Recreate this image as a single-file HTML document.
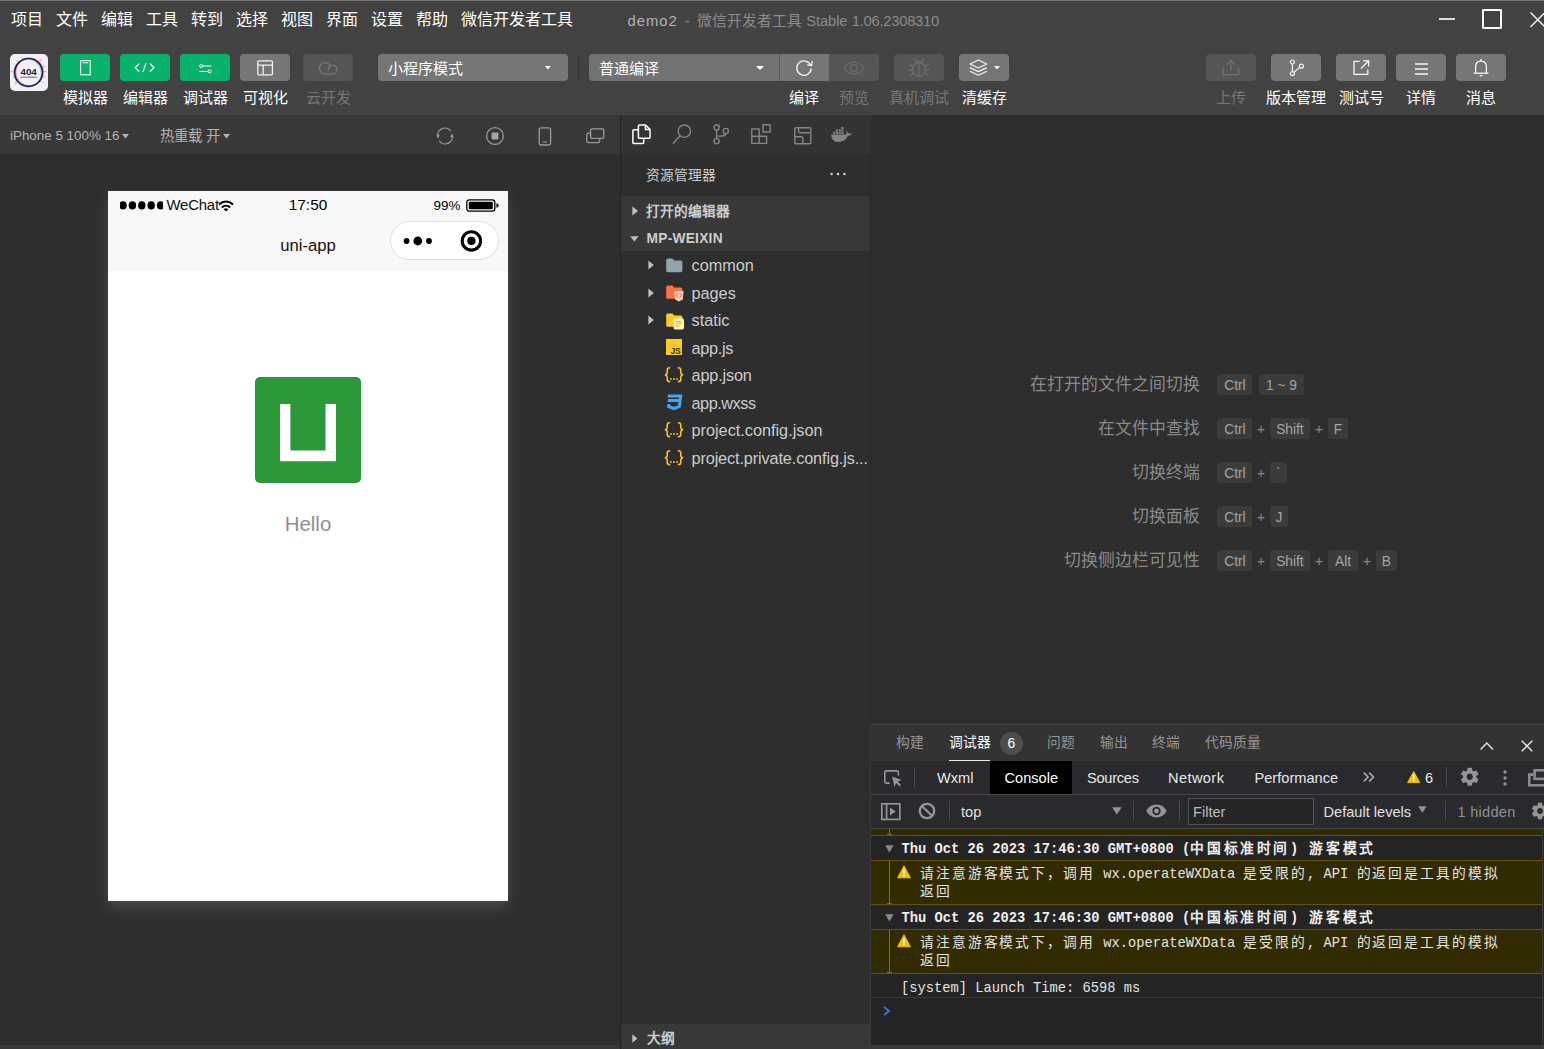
<!DOCTYPE html>
<html lang="zh-CN">
<head>
<meta charset="utf-8">
<title>demo2 - 微信开发者工具 Stable 1.06.2308310</title>
<style>
html,body{margin:0;padding:0;}
body{width:1544px;height:1049px;overflow:hidden;background:#2e2e2e;font-family:"Liberation Sans",sans-serif;color:#fff;position:relative;}
.a{position:absolute;white-space:nowrap;}
.b{position:absolute;}
svg{position:absolute;overflow:visible;}
/* ---------- title + toolbar ---------- */
#top{left:0;top:0;width:1544px;height:115px;background:#424242;}
#topline{left:0;top:0;width:1544px;height:1px;background:#767676;}
.menu{top:9px;height:22px;line-height:22px;font-size:16px;color:#fff;}
.title{top:10px;height:22px;line-height:22px;font-size:14.8px;color:#8c8c8c;}
.gbtn{top:54px;width:50px;height:27px;border-radius:4px;background:#09b26b;}
.ybtn{top:54px;width:50px;height:27px;border-radius:4px;background:#767676;}
.dbtn{top:54px;width:50px;height:27px;border-radius:4px;background:#555555;}
.tl{top:88px;height:20px;line-height:20px;font-size:15px;color:#fff;text-align:center;}
.tl.dis{color:#777;}
.sel{top:54px;height:27px;border-radius:4px;background:#6c6c6c;}
.selt{top:58px;height:22px;line-height:22px;font-size:15px;color:#fff;}
/* ---------- simulator ---------- */
#simbar{left:0;top:115px;width:620px;height:39px;background:#383838;}
.simt{top:125.8px;height:20px;line-height:20px;font-size:13.4px;color:#b3b3b3;}
#vsep1{left:620px;top:115px;width:1px;height:934px;background:#232323;z-index:5;}
#phone{left:108px;top:191px;width:400px;height:710px;background:#fff;box-shadow:0 7px 14px rgba(255,255,255,.14);}
#navbg{left:0;top:0;width:400px;height:80px;background:#f8f8f8;}
.st{color:#000;}
/* ---------- explorer ---------- */
#actbar{left:621px;top:115px;width:250px;height:38px;background:#333333;}
#exphead{left:621px;top:196px;width:250px;height:55px;background:#383838;}
#vsep2{left:870px;top:154px;width:1px;height:891px;background:#282828;}
.sec{font-size:13.75px;font-weight:bold;color:#cccccc;height:20px;line-height:20px;}
.ft{left:691.5px;margin-top:-0.2px;height:24px;line-height:24px;font-size:16.25px;color:#cccccc;}
.jn{height:22px;line-height:22px;font-size:17px;font-weight:bold;color:#fbc02d;letter-spacing:0.2px}
.jn span{font-size:13px;letter-spacing:0.6px;position:relative;top:0.5px}
/* ---------- editor watermark ---------- */
.sl{font-size:16.85px;color:#8a8a8a;height:24px;line-height:26.6px;text-align:right;width:300px;left:899.5px;}
.k{height:21px;line-height:23.6px;border-radius:3px;background:#3b3b3b;color:#a6a6a6;font-size:13.75px;text-align:center;}
.pl{height:21px;line-height:22.4px;color:#8a8a8a;font-size:13.75px;width:12px;text-align:center;}
/* ---------- debugger ---------- */
#dbgline{left:871px;top:724px;width:673px;height:1px;background:#454545;}
#dbgtabs{left:871px;top:725px;width:673px;height:36px;background:#333333;}
.pt{top:733px;height:20px;line-height:20px;font-size:13.75px;color:#969696;}
#dtbar{left:871px;top:761px;width:673px;height:33px;background:#292a2d;}
#ctbar{left:871px;top:795px;width:673px;height:33px;background:#292a2d;}
.dt{top:767px;height:22px;line-height:22px;font-size:14.6px;color:#e8e8e8;}
.ct{top:801px;height:22px;line-height:22px;font-size:14.6px;color:#e0e0e0;}
.vs{width:1px;background:#4a4a4a;}
#cons{left:871px;top:829px;width:671px;height:216px;background:#242424;}
.mono{font-family:"Liberation Mono",monospace;font-size:13.75px;color:#e4e4e4;height:18px;line-height:18px;}
.cj{letter-spacing:1.9px;}
.cjb{letter-spacing:2.6px;}
.warn{left:871px;width:671px;background:#332b00;border-top:1px solid #665500;border-bottom:1px solid #665500;box-sizing:border-box;}
#status{left:0;top:1045px;width:1544px;height:4px;background:#383838;}
</style>
</head>
<body>
<!-- ================= TITLE BAR / MENU ================= -->
<div class="b" id="top"></div>
<div class="b" id="topline"></div>
<div class="a menu" style="left:11px">项目</div>
<div class="a menu" style="left:56px">文件</div>
<div class="a menu" style="left:101px">编辑</div>
<div class="a menu" style="left:146px">工具</div>
<div class="a menu" style="left:191px">转到</div>
<div class="a menu" style="left:236px">选择</div>
<div class="a menu" style="left:281px">视图</div>
<div class="a menu" style="left:326px">界面</div>
<div class="a menu" style="left:371px">设置</div>
<div class="a menu" style="left:416px">帮助</div>
<div class="a menu" style="left:461px">微信开发者工具</div>
<div class="a title" style="left:627.5px;color:#b4b4b4;letter-spacing:1px">demo2</div>
<div class="a title" style="left:685px">-</div>
<div class="a title" style="left:697px">微信开发者工具</div>
<div class="a title" style="left:806.3px;letter-spacing:-0.15px">Stable</div>
<div class="a title" style="left:851.8px;letter-spacing:-0.28px">1.06.2308310</div>
<!-- ================= TOOLBAR ================= -->
<div class="b" style="left:10px;top:54px;width:38px;height:37px;border-radius:5px;background:#f1f0f8;overflow:hidden">
  <svg width="38" height="37" viewBox="0 0 38 37" style="left:0;top:0">
    <g fill="#3fd9a0" opacity=".75"><rect x="0.400" y="17.200" width="3.200" height="0.900"/><rect x="2.600" y="22.600" width="2.400" height="0.900"/><rect x="6.400" y="6.200" width="1.800" height="1"/><rect x="4.800" y="28.400" width="2" height="1.200"/><rect x="3.600" y="9.800" width="2" height="0.700"/></g>
    <g fill="#ff4f8b" opacity=".75"><rect x="29.400" y="5.600" width="2.600" height="1.100"/><rect x="33.600" y="17.200" width="2.600" height="0.900"/><rect x="32.800" y="12.400" width="2.400" height="0.700"/><rect x="33.400" y="22.400" width="2.200" height="0.800"/><rect x="31.400" y="27.600" width="2" height="0.700"/></g>
    <circle cx="18.600" cy="18.400" r="13.900" fill="none" stroke="#ff4f8b" stroke-width="1" opacity=".55" transform="translate(1.200,-0.600)"/>
    <circle cx="18.600" cy="18.400" r="13.900" fill="none" stroke="#3fd9a0" stroke-width="1" opacity=".6" transform="translate(-1.300,0.800)"/>
    <circle cx="18.600" cy="18.400" r="13.900" fill="none" stroke="#2b1850" stroke-width="1.700"/>
    <text x="18.600" y="21.100" font-family="Liberation Sans, sans-serif" font-weight="bold" font-size="9.800" fill="#1d1d4a" text-anchor="middle" letter-spacing="-0.100">404</text>
    <rect x="10.500" y="22.700" width="16.600" height="1" fill="#3b3763" opacity=".75"/>
  </svg>
</div>
<div class="b gbtn" style="left:60px"></div>
<div class="b gbtn" style="left:120px"></div>
<div class="b gbtn" style="left:180px"></div>
<div class="b ybtn" style="left:240px"></div>
<div class="b dbtn" style="left:303px"></div>
<!-- phone icon -->
<svg width="12" height="16" viewBox="0 0 12 16" style="left:79.5px;top:59.5px"><rect x="0.6" y="0.6" width="9.6" height="14.2" fill="none" stroke="#fff" stroke-width="1.1"/><rect x="2.6" y="2.2" width="5.6" height="1.1" fill="#d9f3e6"/></svg>
<!-- code icon -->
<svg width="22" height="10" viewBox="0 0 22 10" style="left:134px;top:63px"><path d="M4.8 1 L1.2 4.6 L4.8 8.2 M11.9 0.6 L8.9 8.6 M16.4 1 L20 4.6 L16.4 8.2" fill="none" stroke="#fff" stroke-width="1.25" stroke-linecap="round" stroke-linejoin="round"/></svg>
<!-- slider icon -->
<svg width="14" height="10" viewBox="0 0 14 10" style="left:199px;top:63.5px"><g fill="none" stroke="#fff" stroke-width="1"><circle cx="2.2" cy="2" r="1.5"/><path d="M3.8 2 H12.4"/><circle cx="10.6" cy="7.4" r="1.5"/><path d="M0.4 7.4 H9"/></g></svg>
<!-- layout icon -->
<svg width="17" height="16" viewBox="0 0 17 16" style="left:256.5px;top:60px"><g fill="none" stroke="#f2f2f2" stroke-width="1.3"><rect x="0.8" y="0.8" width="14.6" height="14" rx="1"/><path d="M0.8 5.2 H15.4 M6.2 5.2 V14.8"/></g></svg>
<!-- cloud icon -->
<svg width="20" height="15" viewBox="0 0 20 15" style="left:318.5px;top:61px"><g fill="none" stroke="#7b7b7b" stroke-width="1.15"><path d="M9.6 12.900 H6.200 A5.600 5.600 0 1 1 11.600 6.200"/><path d="M9.400 12.900 H13.600 A4.300 4.300 0 1 0 9.700 6.800 A4.300 4.300 0 0 0 9.600 9.800"/></g></svg>
<div class="a tl" style="left:55px;width:60px">模拟器</div>
<div class="a tl" style="left:115px;width:60px">编辑器</div>
<div class="a tl" style="left:175px;width:60px">调试器</div>
<div class="a tl" style="left:235px;width:60px">可视化</div>
<div class="a tl dis" style="left:298px;width:60px">云开发</div>
<!-- mode select -->
<div class="b sel" style="left:378px;width:190px;background:#767676"></div>
<div class="a selt" style="left:388px">小程序模式</div>
<svg width="6" height="4" viewBox="0 0 6 4" style="left:544.6px;top:66.3px"><path d="M0 0 H5.600 L2.800 3.400 Z" fill="#fff"/></svg>
<div class="b" style="left:578px;top:54px;width:1px;height:27px;background:#353535"></div>
<!-- compile select -->
<div class="b" style="left:589px;top:54px;width:191px;height:27px;border-radius:4px 0 0 4px;background:#727272"></div>
<div class="a selt" style="left:599px">普通编译</div>
<svg width="8" height="4" viewBox="0 0 8 4" style="left:756px;top:66px"><path d="M0 0 H8 L4 4 Z" fill="#fff"/></svg>
<div class="b" style="left:780px;top:54px;width:49px;height:27px;background:#767676"></div>
<div class="b" style="left:779px;top:54px;width:1px;height:27px;background:#5c5c5c"></div>
<div class="b" style="left:829px;top:54px;width:50px;height:27px;border-radius:0 4px 4px 0;background:#555555"></div>
<!-- refresh icon -->
<svg width="20" height="20" viewBox="0 0 20 20" style="left:794px;top:57.5px"><path d="M16.6 7.2 A7.2 7.2 0 1 0 17.2 10.4" fill="none" stroke="#f4f4f4" stroke-width="1.3"/><path d="M13.2 6.8 L17.6 7.6 L18.2 3.2" fill="none" stroke="#f4f4f4" stroke-width="1.3" stroke-linejoin="miter"/></svg>
<!-- eye icon -->
<svg width="22" height="14" viewBox="0 0 22 14" style="left:843px;top:60.5px"><path d="M1 7 C4 2.2 7.6 1 11 1 C14.4 1 18 2.2 21 7 C18 11.8 14.4 13 11 13 C7.6 13 4 11.8 1 7 Z" fill="none" stroke="#6f6f6f" stroke-width="1.2"/><circle cx="11" cy="7" r="3.4" fill="none" stroke="#6f6f6f" stroke-width="1.2"/></svg>
<div class="b dbtn" style="left:894px"></div>
<!-- bug icon -->
<svg width="24" height="20" viewBox="0 0 24 20" style="left:907px;top:57.5px"><g fill="none" stroke="#707070" stroke-width="1.15" stroke-linecap="round"><path d="M12 5 C16.6 5 18.4 8 18.4 11.6 C18.4 15.4 16 18.4 12 18.4 C8 18.400 5.600 15.4 5.600 11.6 C5.600 8 7.400 5 12 5 Z"/><path d="M12 5.400 V18.200"/><path d="M8.800 5.400 C8.800 2.200 15.200 2.200 15.200 5.400"/><path d="M6 8.400 L2.400 6.200 M5.600 11.800 H1.200 M6.400 15.400 L2.800 17.800 M18 8.400 L21.600 6.200 M18.400 11.800 H22.800 M17.600 15.400 L21.200 17.800 M9 2.800 L7.400 0.800 M15 2.800 L16.600 0.800"/></g></svg>
<div class="b ybtn" style="left:959px"></div>
<!-- layers icon -->
<svg width="20" height="18" viewBox="0 0 20 18" style="left:968.5px;top:59px"><g fill="none" stroke="#f4f4f4" stroke-width="1.2" stroke-linejoin="round"><path d="M9.4 1 L17.8 5 L9.4 9 L1 5 Z"/><path d="M1 8.6 L9.4 12.6 L17.8 8.6"/><path d="M1 12.2 L9.4 16.2 L17.8 12.2"/></g></svg>
<svg width="6" height="4" viewBox="0 0 6 4" style="left:994px;top:66px"><path d="M0 0 H6 L3 3.6 Z" fill="#f4f4f4"/></svg>
<div class="a tl" style="left:774px;width:60px">编译</div>
<div class="a tl dis" style="left:824px;width:60px">预览</div>
<div class="a tl dis" style="left:884px;width:70px">真机调试</div>
<div class="a tl" style="left:954px;width:60px">清缓存</div>
<!-- right buttons -->
<div class="b dbtn" style="left:1206px"></div>
<div class="b ybtn" style="left:1271px"></div>
<div class="b ybtn" style="left:1336px"></div>
<div class="b ybtn" style="left:1396px"></div>
<div class="b ybtn" style="left:1456px"></div>
<!-- upload icon -->
<svg width="18" height="17" viewBox="0 0 18 17" style="left:1222px;top:59px"><g fill="none" stroke="#747474" stroke-width="1.2"><path d="M1 9 V15.6 H16.6 V9"/><path d="M8.8 11.6 V1.6 M4.8 5.4 L8.8 1.4 L12.8 5.4"/></g></svg>
<!-- branch icon -->
<svg width="16" height="18" viewBox="0 0 16 18" style="left:1288.5px;top:58.5px"><g fill="none" stroke="#f6f6f6" stroke-width="1.2"><circle cx="3.4" cy="3" r="2"/><circle cx="3.4" cy="14.6" r="2"/><circle cx="12.4" cy="7.2" r="2"/><path d="M3.4 5 V12.6 M4.900 13.300 L10.800 8.400"/></g></svg>
<!-- external icon -->
<svg width="18" height="16" viewBox="0 0 18 16" style="left:1353px;top:59.5px"><g fill="none" stroke="#f6f6f6" stroke-width="1.3"><path d="M6.6 1.4 H1 V14.4 H14.8 V9.6"/><path d="M8 8.6 L15.4 1 M10 0.9 H15.6 V6.4"/></g></svg>
<!-- menu icon -->
<svg width="14" height="12" viewBox="0 0 14 12" style="left:1414.5px;top:62.5px"><path d="M0 1 H13 M0 6 H13 M0 11 H13" fill="none" stroke="#f6f6f6" stroke-width="1.3"/></svg>
<!-- bell icon -->
<svg width="16" height="20" viewBox="0 0 16 20" style="left:1473px;top:58px"><g fill="none" stroke="#f6f6f6" stroke-width="1.3"><path d="M2.6 15 V9 C2.6 5.4 4.8 3.2 8 3.2 C11.2 3.2 13.4 5.4 13.4 9 V15"/><path d="M0.6 15.2 H15.4"/><path d="M8 3 V1 M6.6 17.6 H9.4"/></g></svg>
<div class="a tl dis" style="left:1201px;width:60px">上传</div>
<div class="a tl" style="left:1261px;width:70px">版本管理</div>
<div class="a tl" style="left:1331px;width:60px">测试号</div>
<div class="a tl" style="left:1391px;width:60px">详情</div>
<div class="a tl" style="left:1451px;width:60px">消息</div>
<!-- window controls -->
<div class="b" style="left:1439px;top:18px;width:16px;height:2px;background:#dedede"></div>
<div class="b" style="left:1482px;top:9px;width:16px;height:16px;border:2px solid #fafafa;border-radius:1px"></div>
<svg width="16" height="16" viewBox="0 0 16 16" style="left:1530px;top:11.5px"><path d="M0.5 0.5 L15 15 M15 0.5 L0.5 15" stroke="#f0f0f0" stroke-width="1.5" fill="none"/></svg>

<!-- ================= SIMULATOR ================= -->
<div class="b" id="simbar"></div>
<div class="a simt" style="left:10px">iPhone 5 100% 16</div>
<svg width="7" height="5" viewBox="0 0 7 5" style="left:122px;top:133.5px"><path d="M0 0 H7 L3.5 4.6 Z" fill="#b3b3b3"/></svg>
<div class="b" style="left:145px;top:115px;width:1px;height:39px;background:#363636"></div>
<div class="a simt" style="left:160px;font-size:14.4px">热重载 开</div>
<svg width="7" height="5" viewBox="0 0 7 5" style="left:223px;top:133.5px"><path d="M0 0 H7 L3.5 4.6 Z" fill="#b3b3b3"/></svg>
<!-- sim icons -->
<svg width="18" height="18" viewBox="0 0 18 18" style="left:436px;top:127px"><g fill="none" stroke="#9a9a9a" stroke-width="1.2"><path d="M1.700 10.600 A7.400 7.400 0 0 1 14.800 4.200"/><path d="M16.300 7.400 A7.400 7.400 0 0 1 3.200 13.800"/></g><path d="M0.600 7.800 L3.600 7.400 L2.600 11 Z M17.400 10.200 L14.400 10.600 L15.400 7 Z" fill="#9a9a9a"/></svg>
<svg width="20" height="20" viewBox="0 0 20 20" style="left:485px;top:126px"><circle cx="10" cy="10" r="8.4" fill="none" stroke="#9a9a9a" stroke-width="1.3"/><rect x="6.6" y="6.6" width="6.8" height="6.8" rx="0.8" fill="#a6a6a6"/></svg>
<svg width="14" height="20" viewBox="0 0 14 20" style="left:538px;top:126.5px"><rect x="1.2" y="0.8" width="11.4" height="17.2" rx="1.8" fill="none" stroke="#9a9a9a" stroke-width="1.3"/><path d="M4.8 14.9 H9" stroke="#9a9a9a" stroke-width="1.1"/></svg>
<svg width="20" height="16" viewBox="0 0 20 16" style="left:585.5px;top:127.5px"><g fill="none" stroke="#9a9a9a" stroke-width="1.3"><rect x="4.6" y="0.8" width="13.2" height="9.6" rx="1.6"/><path d="M4.4 5.2 H2.4 A1.6 1.6 0 0 0 0.8 6.8 V13 A1.6 1.6 0 0 0 2.4 14.6 H12 A1.6 1.6 0 0 0 13.6 13 V10.6"/></g></svg>
<div class="b" id="vsep1"></div>
<!-- phone -->
<div class="b" id="phone">
  <div class="b" id="navbg"></div>
  <!-- status bar -->
  <svg width="43.2" height="9" viewBox="0 0 43.2 9" style="left:11.9px;top:10.2px;overflow:hidden"><g fill="#000"><ellipse cx="3" cy="4.4" rx="3.7" ry="4.1"/><ellipse cx="12.4" cy="4.4" rx="3.7" ry="4.1"/><ellipse cx="21.8" cy="4.4" rx="3.7" ry="4.1"/><ellipse cx="31.2" cy="4.4" rx="3.7" ry="4.1"/><ellipse cx="40.6" cy="4.4" rx="3.7" ry="4.1"/></g></svg>
  <div class="a st" style="left:58.5px;top:4px;height:20px;line-height:20px;font-size:14.9px;letter-spacing:-0.2px;color:#111">WeChat</div>
  <svg width="16" height="12" viewBox="0 0 16 12" style="left:109.5px;top:8.5px"><g fill="none" stroke="#000" stroke-width="2" stroke-linecap="butt"><path d="M1 4.4 C5 0.6 11 0.6 15 4.4"/><path d="M3.8 7.4 C6.2 5.2 9.8 5.2 12.2 7.4"/></g><path d="M8 11.6 L5.6 9.2 C7 8 9 8 10.4 9.2 Z" fill="#000"/></svg>
  <div class="a st" style="left:150px;top:4px;width:100px;text-align:center;height:20px;line-height:20px;font-size:15.4px">17:50</div>
  <div class="a st" style="left:325.5px;top:5px;height:20px;line-height:20px;font-size:13.4px">99%</div>
  <svg width="34" height="14" viewBox="0 0 34 14" style="left:358px;top:7.5px"><rect x="0.8" y="0.8" width="28" height="11.4" rx="2.6" fill="none" stroke="#000" stroke-width="1.3"/><rect x="2.8" y="2.8" width="24" height="7.4" rx="1.2" fill="#000"/><path d="M30.4 4.4 H31 Q32.6 4.4 32.6 6.5 Q32.6 8.6 31 8.6 H30.4 Z" fill="#000"/></svg>
  <!-- nav -->
  <div class="a st" style="left:100px;top:43px;width:200px;text-align:center;height:24px;line-height:24px;font-size:16.7px;color:#111">uni-app</div>
  <div class="b" style="left:281.6px;top:29.8px;width:107.4px;height:37.4px;border:1px solid #dfdfdf;border-radius:20px;background:#fff"></div>
  <svg width="30" height="10" viewBox="0 0 30 10" style="left:294.5px;top:45px"><g fill="#000"><circle cx="3.6" cy="5" r="2.9"/><circle cx="14.8" cy="5" r="4.4"/><circle cx="26" cy="5" r="2.9"/></g></svg>
  <svg width="24" height="24" viewBox="0 0 24 24" style="left:351px;top:38px"><circle cx="12.4" cy="11.9" r="9.2" fill="none" stroke="#000" stroke-width="3.1"/><circle cx="12.4" cy="11.9" r="4.1" fill="#000"/></svg>
  <!-- logo -->
  <div class="b" style="left:147px;top:186px;width:106px;height:106px;border-radius:5px;background:#2b9939"></div>
  <svg width="58" height="58" viewBox="0 0 58 58" style="left:171.5px;top:212.5px"><path d="M0 0 H10.4 V46.600 H45.5 V0 H56 V57.2 H0 Z" fill="#fff"/></svg>
  <div class="a" style="left:100px;top:318.7px;width:200px;text-align:center;height:28px;line-height:28px;font-size:20.4px;color:#8f8f94">Hello</div>
</div>

<!-- ================= EXPLORER ================= -->
<div class="b" id="actbar"></div>
<!-- files icon (active) -->
<svg width="20" height="21" viewBox="0 0 20 21" style="left:631.5px;top:124px"><g fill="none" stroke="#ffffff" stroke-width="1.5" stroke-linejoin="round"><path d="M6.4 14.2 V2 Q6.4 0.9 7.5 0.9 H13.6 L18 5.4 V13.2 Q18 14.3 16.9 14.3 H7.5 Q6.4 14.3 6.4 13.2"/><path d="M13.4 1 V5.6 H18"/><path d="M6.2 5.8 H2 Q0.9 5.8 0.9 6.9 V18.4 Q0.9 19.5 2 19.5 H10.6 Q11.7 19.5 11.7 18.4 V14.6"/></g></svg>
<!-- search -->
<svg width="20" height="21" viewBox="0 0 20 21" style="left:671.5px;top:124px"><g fill="none" stroke="#858585" stroke-width="1.4"><circle cx="12.4" cy="7.2" r="6.2"/><path d="M8.2 11.8 L0.8 19.8"/></g></svg>
<!-- git -->
<svg width="17" height="21" viewBox="0 0 17 21" style="left:713px;top:123.5px"><g fill="none" stroke="#858585" stroke-width="1.4"><circle cx="3.6" cy="3.4" r="2.6"/><circle cx="3.6" cy="17.2" r="2.6"/><circle cx="12.8" cy="7" r="2.6"/><path d="M3.6 6 V14.6"/><path d="M12.8 9.6 C12.8 12.4 9 12 4.4 12.2"/></g></svg>
<!-- extensions -->
<svg width="21" height="21" viewBox="0 0 21 21" style="left:751px;top:123.5px"><g fill="none" stroke="#858585" stroke-width="1.4" stroke-linejoin="round"><path d="M0.8 5 H8.2 V19.4 H0.8 Z"/><path d="M0.8 12.2 H15.6 V19.4 H8.2"/><rect x="12" y="0.8" width="7.2" height="7.2"/></g></svg>
<!-- layout -->
<svg width="18" height="18" viewBox="0 0 18 18" style="left:793.5px;top:126.5px"><g fill="none" stroke="#858585" stroke-width="1.4" stroke-linejoin="round"><rect x="0.8" y="0.8" width="16" height="16" rx="1"/><path d="M4.6 0.8 V4.4 Q4.6 5.8 6 5.8 H16.8"/><path d="M0.8 9.8 H7 Q8.8 9.8 8.8 11.6 V16.8"/></g></svg>
<!-- docker whale -->
<svg width="21" height="16" viewBox="0 0 21 16" style="left:830.5px;top:126.5px"><g fill="#858585"><path d="M0.2 7.4 H15.2 C15.8 6.6 15.6 5 15 4 C16.2 4.4 17 5.4 17.2 6.4 C18.4 6 19.6 6.2 20.6 7 C19.8 8.2 18.4 8.8 17 8.6 C15.4 12.8 12 15 7.6 15 C3 15 0.4 12.2 0.2 7.4 Z"/><rect x="2.2" y="4.8" width="2.2" height="2"/><rect x="4.9" y="4.8" width="2.2" height="2"/><rect x="7.6" y="4.8" width="2.2" height="2"/><rect x="10.3" y="4.8" width="2.2" height="2"/><rect x="4.9" y="2.4" width="2.2" height="2"/><rect x="7.6" y="2.4" width="2.2" height="2"/><rect x="10.3" y="2.4" width="2.2" height="2"/><rect x="10.3" y="0" width="2.2" height="2"/></g></svg>
<div class="a" style="left:645.5px;top:165.500px;height:20px;line-height:20px;font-size:13.75px;color:#cccccc">资源管理器</div>
<svg width="16" height="4" viewBox="0 0 16 4" style="left:830px;top:172px"><g fill="#cfcfcf"><circle cx="1.6" cy="2" r="1.3"/><circle cx="8" cy="2" r="1.3"/><circle cx="14.4" cy="2" r="1.3"/></g></svg>
<div class="b" id="exphead"></div>
<svg width="7" height="10" viewBox="0 0 7 10" style="left:631.5px;top:205.5px"><path d="M0.4 0.4 L6 5 L0.4 9.6 Z" fill="#c0c0c0"/></svg>
<div class="a sec" style="left:645.5px;top:201.500px">打开的编辑器</div>
<svg width="9" height="6" viewBox="0 0 9 6" style="left:629.5px;top:235.5px"><path d="M0.2 0.2 H8.6 L4.4 5.6 Z" fill="#c0c0c0"/></svg>
<div class="a sec" style="left:646.5px;top:228.6px;letter-spacing:0.25px">MP-WEIXIN</div>
<!-- tree arrows -->
<svg width="7" height="10" viewBox="0 0 7 10" style="left:648px;top:260px"><path d="M0.4 0.4 L5.8 5 L0.4 9.6 Z" fill="#c0c0c0"/></svg>
<svg width="7" height="10" viewBox="0 0 7 10" style="left:648px;top:287.5px"><path d="M0.4 0.4 L5.8 5 L0.4 9.6 Z" fill="#c0c0c0"/></svg>
<svg width="7" height="10" viewBox="0 0 7 10" style="left:648px;top:315px"><path d="M0.4 0.4 L5.8 5 L0.4 9.6 Z" fill="#c0c0c0"/></svg>
<!-- folder common -->
<svg width="17" height="15" viewBox="0 0 17 15" style="left:665.5px;top:257.5px"><path d="M1.8 0.4 H6.4 L8.2 2.4 H14.8 Q16.4 2.4 16.4 4 V12.6 Q16.4 14.2 14.8 14.2 H1.8 Q0.2 14.2 0.2 12.6 V2 Q0.2 0.4 1.8 0.4 Z" fill="#90a4ae"/></svg>
<!-- folder pages -->
<svg width="19" height="17" viewBox="0 0 19 17" style="left:665.5px;top:285px"><path d="M1.8 0.4 H6.4 L8.2 2.4 H14.8 Q16.4 2.4 16.4 4 V12.2 Q16.4 13.8 14.8 13.8 H1.8 Q0.2 13.8 0.2 12.2 V2 Q0.2 0.4 1.8 0.4 Z" fill="#ff7043"/><path d="M8.2 6 H17.6 L16.8 14.6 L12.9 16.4 L9 14.6 Z" fill="#ffccbc"/><path d="M11.6 8.6 L10 10.4 L11.6 12.2 M14.2 8.6 L15.8 10.4 L14.2 12.2" fill="none" stroke="#ff5722" stroke-width="1"/></svg>
<!-- folder static -->
<svg width="19" height="17" viewBox="0 0 19 17" style="left:665.5px;top:312.5px"><path d="M1.8 0.4 H6.4 L8.2 2.4 H14.8 Q16.4 2.4 16.4 4 V12.2 Q16.4 13.8 14.8 13.8 H1.8 Q0.2 13.8 0.2 12.2 V2 Q0.2 0.4 1.8 0.4 Z" fill="#ffca28"/><rect x="7.6" y="5.6" width="10.4" height="10.8" rx="1.6" fill="#fff3c4"/><path d="M10 8.6 H15.8 M10 10.8 H15.8 M10 13 H13.6" stroke="#f9b500" stroke-width="1.1" fill="none"/></svg>
<!-- js icon -->
<div class="b" style="left:666px;top:339px;width:16px;height:16px;background:#ffca28"></div>
<div class="a" style="left:670.5px;top:345.5px;height:10px;line-height:10px;font-size:8.6px;font-weight:bold;color:#37300f;letter-spacing:-0.3px">JS</div>
<!-- json icons -->
<svg width="20" height="16" viewBox="0 0 20 16" style="left:663.8px;top:367.2px"><g fill="none" stroke="#fbc02d" stroke-width="1.55" stroke-linecap="round"><path d="M5.6 0.800 C3.6 0.800 3.2 1.600 3.2 3.2 V5.4 C3.2 6.800 2.6 7.4 0.9 7.700 C2.6 8 3.2 8.600 3.2 10 V12.2 C3.2 13.800 3.6 14.600 5.6 14.600"/><path d="M14.4 0.8 C16.400 0.8 16.8 1.6 16.8 3.2 V5.4 C16.8 6.8 17.4 7.400 19.1 7.7 C17.4 8 16.8 8.6 16.8 10 V12.2 C16.8 13.8 16.4 14.6 14.4 14.6"/></g><g fill="#fbc02d"><circle cx="6.9" cy="12" r="0.9"/><circle cx="10" cy="12" r="0.9"/><circle cx="13.1" cy="12" r="0.9"/></g></svg>
<svg width="20" height="16" viewBox="0 0 20 16" style="left:663.8px;top:422.2px"><g fill="none" stroke="#fbc02d" stroke-width="1.55" stroke-linecap="round"><path d="M5.6 0.800 C3.6 0.800 3.2 1.600 3.2 3.2 V5.4 C3.2 6.800 2.6 7.4 0.9 7.700 C2.6 8 3.2 8.600 3.2 10 V12.2 C3.2 13.800 3.6 14.600 5.6 14.600"/><path d="M14.4 0.8 C16.400 0.8 16.8 1.6 16.8 3.2 V5.4 C16.8 6.8 17.4 7.400 19.1 7.7 C17.4 8 16.8 8.6 16.8 10 V12.2 C16.8 13.8 16.4 14.6 14.4 14.6"/></g><g fill="#fbc02d"><circle cx="6.9" cy="12" r="0.9"/><circle cx="10" cy="12" r="0.9"/><circle cx="13.1" cy="12" r="0.9"/></g></svg>
<svg width="20" height="16" viewBox="0 0 20 16" style="left:663.8px;top:449.7px"><g fill="none" stroke="#fbc02d" stroke-width="1.55" stroke-linecap="round"><path d="M5.6 0.800 C3.6 0.800 3.2 1.600 3.2 3.2 V5.4 C3.2 6.800 2.6 7.4 0.9 7.700 C2.6 8 3.2 8.600 3.2 10 V12.2 C3.2 13.800 3.6 14.600 5.6 14.600"/><path d="M14.4 0.8 C16.400 0.8 16.8 1.6 16.8 3.2 V5.4 C16.8 6.8 17.4 7.400 19.1 7.7 C17.4 8 16.8 8.6 16.8 10 V12.2 C16.8 13.8 16.4 14.6 14.4 14.6"/></g><g fill="#fbc02d"><circle cx="6.9" cy="12" r="0.9"/><circle cx="10" cy="12" r="0.9"/><circle cx="13.1" cy="12" r="0.9"/></g></svg>
<!-- css icon -->
<svg width="17" height="17" viewBox="0 0 17 17" style="left:665.5px;top:393.5px"><path d="M2 0.4 H16.4 L14.8 13.4 L8 16.2 L1 13.4 L1.4 10 H4.4 L4.2 11.4 L8 12.8 L12 11.4 L12.4 8 H1.6 L2 5 H12.8 L13 3.4 H1.6 Z" fill="#42a5f5"/></svg>
<div class="a ft" style="top:252.8px">common</div>
<div class="a ft" style="top:281px">pages</div>
<div class="a ft" style="top:308.1px">static</div>
<div class="a ft" style="top:336px;letter-spacing:-0.3px">app.js</div>
<div class="a ft" style="top:363.5px;letter-spacing:-0.15px">app.json</div>
<div class="a ft" style="top:391px;letter-spacing:-0.45px">app.wxss</div>
<div class="a ft" style="top:418.5px">project.config.json</div>
<div class="a ft" style="top:446px;letter-spacing:-0.12px">project.private.config.js...</div>
<div class="b" id="vsep2"></div>
<!-- outline -->
<div class="b" style="left:621px;top:1023.5px;width:249px;height:26px;background:#383838;z-index:3"></div>
<svg width="6" height="9" viewBox="0 0 6 9" style="left:632px;top:1034px;z-index:4"><path d="M0.3 0.3 L5.4 4.5 L0.3 8.7 Z" fill="#c0c0c0"/></svg>
<div class="a sec" style="left:646.5px;top:1028.7px;z-index:4">大纲</div>

<!-- ================= EDITOR WATERMARK ================= -->
<div class="a sl" style="top:372.3px">在打开的文件之间切换</div>
<div class="a k" style="left:1217.4px;top:374.3px;width:35.1px">Ctrl</div>
<div class="a k" style="left:1258.5px;top:374.3px;width:45.9px">1 ~ 9</div>
<div class="a sl" style="top:416.2px">在文件中查找</div>
<div class="a k" style="left:1217.4px;top:418.2px;width:35.1px">Ctrl</div>
<div class="a pl" style="left:1255.0px;top:418.7px">+</div>
<div class="a k" style="left:1269.6px;top:418.2px;width:40.7px">Shift</div>
<div class="a pl" style="left:1313.0px;top:418.7px">+</div>
<div class="a k" style="left:1327.7px;top:418.2px;width:20.3px">F</div>
<div class="a sl" style="top:460.3px">切换终端</div>
<div class="a k" style="left:1217.4px;top:462.3px;width:35.1px">Ctrl</div>
<div class="a pl" style="left:1255.0px;top:462.8px">+</div>
<div class="a k" style="left:1269.6px;top:462.3px;width:17.4px">`</div>
<div class="a sl" style="top:504.2px">切换面板</div>
<div class="a k" style="left:1217.4px;top:506.2px;width:35.1px">Ctrl</div>
<div class="a pl" style="left:1255.0px;top:506.7px">+</div>
<div class="a k" style="left:1269.6px;top:506.2px;width:18.8px">J</div>
<div class="a sl" style="top:548.4px">切换侧边栏可见性</div>
<div class="a k" style="left:1217.4px;top:550.4px;width:35.1px">Ctrl</div>
<div class="a pl" style="left:1255.0px;top:550.9px">+</div>
<div class="a k" style="left:1269.6px;top:550.4px;width:40.7px">Shift</div>
<div class="a pl" style="left:1313.0px;top:550.9px">+</div>
<div class="a k" style="left:1327.7px;top:550.4px;width:30.8px">Alt</div>
<div class="a pl" style="left:1361.0px;top:550.9px">+</div>
<div class="a k" style="left:1375.6px;top:550.4px;width:21.4px">B</div>
<!-- ================= DEBUGGER ================= -->
<div class="b" id="dbgline"></div>
<div class="b" id="dbgtabs"></div>
<div class="a pt" style="left:896px">构建</div>
<div class="a pt" style="left:949px;color:#fff">调试器</div>
<div class="b" style="left:949px;top:760px;width:41px;height:1px;background:#e7e7e7"></div>
<div class="a" style="left:1000px;top:731.5px;width:23px;height:23px;border-radius:12px;background:#4d4d4d;color:#fff;font-size:14px;line-height:23px;text-align:center">6</div>
<div class="a pt" style="left:1047px">问题</div>
<div class="a pt" style="left:1099.5px">输出</div>
<div class="a pt" style="left:1152px">终端</div>
<div class="a pt" style="left:1205px">代码质量</div>
<svg width="14" height="8" viewBox="0 0 14 8" style="left:1480px;top:741.5px"><path d="M0.6 7.4 L6.8 1 L13 7.4" fill="none" stroke="#e6e6e6" stroke-width="1.4"/></svg>
<svg width="12" height="12" viewBox="0 0 12 12" style="left:1520.5px;top:740px"><path d="M0.7 0.7 L11.3 11.3 M11.3 0.7 L0.7 11.3" fill="none" stroke="#e6e6e6" stroke-width="1.4"/></svg>
<!-- devtools tab bar -->
<div class="b" id="dtbar"></div>
<div class="b" style="left:871px;top:794px;width:673px;height:1px;background:#484848"></div>
<div class="b" style="left:990px;top:761px;width:82px;height:33px;background:#000"></div>
<svg width="19" height="18" viewBox="0 0 19 18" style="left:883.8px;top:769.5px"><g fill="none" stroke="#959595" stroke-width="1.6"><path d="M14.4 5.4 V2.4 Q14.4 0.9 12.9 0.9 H2.3 Q0.8 0.9 0.8 2.4 V11.6 Q0.8 13.1 2.3 13.1 H5.8"/></g><path d="M8 6.4 L17.6 10 L13.6 11.6 L17 15 L15.6 16.4 L12.2 13 L10.6 16.8 Z" fill="#959595"/></svg>
<div class="b vs" style="left:914px;top:767px;height:20px"></div>
<div class="a dt" style="left:937px">Wxml</div>
<div class="a dt" style="left:1004.5px;color:#fff">Console</div>
<div class="a dt" style="left:1087px;letter-spacing:-0.25px">Sources</div>
<div class="a dt" style="left:1168px;letter-spacing:0.4px">Network</div>
<div class="a dt" style="left:1254.5px">Performance</div>
<svg width="12" height="10" viewBox="0 0 12 10" style="left:1363px;top:772px"><path d="M0.8 0.6 L5 5 L0.8 9.4 M6.2 0.6 L10.4 5 L6.2 9.4" fill="none" stroke="#a8a8a8" stroke-width="1.7"/></svg>
<svg width="13.6" height="12.7" viewBox="0 0 15 14" style="left:1406.5px;top:770.8px"><path d="M7.4 0.6 L14.2 12.8 H0.6 Z" fill="#f5bd00" stroke="#f5bd00" stroke-width="1" stroke-linejoin="round"/><rect x="6.6" y="4.2" width="1.7" height="5" fill="#fff"/><rect x="6.6" y="10" width="1.7" height="1.7" fill="#fff"/></svg>
<div class="a dt" style="left:1425px">6</div>
<div class="b vs" style="left:1445.5px;top:767px;height:20px"></div>
<svg width="21.5" height="21.5" viewBox="0 0 24 24" style="left:1458.7px;top:766.3px"><path fill="#959595" d="M19.43 12.98c.04-.32.07-.64.07-.98s-.03-.66-.07-.98l2.11-1.65c.19-.15.24-.42.12-.64l-2-3.46c-.12-.22-.39-.3-.61-.22l-2.49 1c-.52-.4-1.08-.73-1.69-.98l-.38-2.65C14.46 2.18 14.25 2 14 2h-4c-.25 0-.46.18-.49.42l-.38 2.65c-.61.25-1.17.59-1.69.98l-2.49-1c-.23-.09-.49 0-.61.22l-2 3.46c-.13.22-.07.49.12.64l2.11 1.65c-.04.32-.07.65-.07.98s.03.66.07.98l-2.11 1.65c-.19.15-.24.42-.12.64l2 3.46c.12.22.39.3.61.22l2.49-1c.52.4 1.08.73 1.69.98l.38 2.65c.03.24.24.42.49.42h4c.25 0 .46-.18.49-.42l.38-2.65c.61-.25 1.17-.59 1.69-.98l2.49 1c.23.09.49 0 .61-.22l2-3.46c.12-.22.07-.49-.12-.64l-2.11-1.65zM12 15.5c-1.93 0-3.500-1.570-3.500-3.500s1.570-3.500 3.500-3.500 3.500 1.570 3.500 3.500-1.570 3.500-3.500 3.500z"/></svg>
<svg width="4" height="16" viewBox="0 0 4 16" style="left:1502.8px;top:769.6px"><g fill="#959595"><circle cx="2" cy="2" r="1.7"/><circle cx="2" cy="8" r="1.7"/><circle cx="2" cy="14" r="1.7"/></g></svg>
<svg width="18" height="18" viewBox="0 0 18 18" style="left:1528px;top:769px"><g fill="none" stroke="#8c8c8c" stroke-width="2.6"><rect x="6.6" y="1.300" width="14" height="8.600"/><path d="M5.400 5.600 H1.300 V16.300 H19"/></g></svg>
<!-- console toolbar -->
<div class="b" id="ctbar"></div>
<div class="b" style="left:871px;top:828px;width:673px;height:1px;background:#484848"></div>
<svg width="20" height="18" viewBox="0 0 20 18" style="left:880.5px;top:802.5px"><g fill="none" stroke="#959595" stroke-width="1.7"><rect x="0.8" y="0.8" width="18" height="15.6"/><path d="M5.6 0.8 V16.4"/></g><path d="M9 4.6 L14.8 8.6 L9 12.6 Z" fill="#959595"/></svg>
<svg width="18" height="18" viewBox="0 0 18 18" style="left:918px;top:802.3px"><g fill="none" stroke="#959595" stroke-width="2.3"><circle cx="9" cy="9" r="7.2"/><path d="M3.8 4 L14.2 14"/></g></svg>
<div class="b vs" style="left:949px;top:801px;height:20px"></div>
<div class="a ct" style="left:961px">top</div>
<svg width="10" height="8" viewBox="0 0 10 8" style="left:1111.5px;top:807px"><path d="M0.2 0.2 H9.6 L4.9 7.6 Z" fill="#959595"/></svg>
<div class="b vs" style="left:1132.5px;top:801px;height:20px"></div>
<svg width="21" height="14" viewBox="0 0 21 14" style="left:1146px;top:804px"><path d="M10.5 0.6 C5.8 0.6 2 3.4 0.4 7 C2 10.6 5.8 13.4 10.5 13.4 C15.2 13.4 19 10.6 20.6 7 C19 3.4 15.2 0.6 10.5 0.6 Z M10.5 11.2 A4.2 4.2 0 1 1 10.5 2.8 A4.2 4.2 0 0 1 10.5 11.2 Z M10.5 4.6 A2.4 2.4 0 1 0 10.5 9.4 A2.4 2.4 0 0 0 10.5 4.600 Z" fill="#959595" fill-rule="evenodd"/></svg>
<div class="b vs" style="left:1179px;top:801px;height:20px"></div>
<div class="b" style="left:1187.5px;top:798px;width:124px;height:24.5px;background:#242424;border:1px solid #525252"></div>
<div class="a ct" style="left:1193px;color:#bdbdbd">Filter</div>
<div class="a ct" style="left:1323.5px">Default levels</div>
<svg width="9" height="7" viewBox="0 0 9 7" style="left:1417.5px;top:806px"><path d="M0.2 0.2 H8.6 L4.4 6.8 Z" fill="#959595"/></svg>
<div class="b vs" style="left:1445px;top:801px;height:20px"></div>
<div class="a ct" style="left:1457.5px;color:#909090;letter-spacing:0.25px">1 hidden</div>
<svg width="20" height="20" viewBox="0 0 24 24" style="left:1529.5px;top:800.6px"><path fill="#959595" d="M19.43 12.98c.04-.32.07-.64.07-.98s-.03-.66-.07-.98l2.11-1.65c.19-.15.24-.42.12-.64l-2-3.46c-.12-.22-.39-.3-.61-.22l-2.49 1c-.52-.4-1.08-.73-1.69-.98l-.38-2.65C14.46 2.180 14.25 2 14 2h-4c-.25 0-.46.18-.49.42l-.38 2.65c-.61.25-1.17.59-1.69.98l-2.49-1c-.23-.09-.49 0-.61.22l-2 3.46c-.13.22-.07.49.12.64l2.11 1.65c-.04.32-.07.65-.07.98s.03.66.07.98l-2.11 1.65c-.19.15-.24.42-.12.64l2 3.46c.12.22.39.3.61.22l2.49-1c.52.4 1.08.73 1.69.98l.38 2.65c.03.24.24.42.49.42h4c.25 0 .46-.18.49-.42l.38-2.65c.61-.25 1.17-.59 1.69-.98l2.49 1c.23.09.49 0 .61-.22l2-3.46c.12-.22.07-.49-.12-.64l-2.11-1.65zM12 15.5c-1.93 0-3.500-1.570-3.500-3.500s1.570-3.500 3.500-3.500 3.500 1.570 3.500 3.500-1.570 3.500-3.500 3.500z"/></svg>
<!-- console messages -->
<div class="b" id="cons"></div>
<div class="b" style="left:1542px;top:829px;width:1px;height:216px;background:#3c3c3c"></div><div class="b" style="left:1543px;top:829px;width:1px;height:216px;background:#262626"></div>
<div class="b" style="left:870px;top:724px;width:1px;height:321px;background:#3a3a3a"></div>
<div class="b warn" style="top:829px;height:7px;border-top:none"></div>
<div class="b warn" style="top:860px;height:45px"></div>
<div class="b warn" style="top:929px;height:45px"></div>
<div class="b" style="left:871px;top:997px;width:671px;height:1px;background:#3a3a3a"></div>
<!-- group guide lines -->
<div class="b" style="left:888.5px;top:829px;width:1px;height:5px;background:#6b6b5c"></div>
<div class="b" style="left:886.5px;top:833.500px;width:5px;height:1px;background:#6b6b5c"></div>
<div class="b" style="left:888.5px;top:861px;width:1px;height:42px;background:#6b6b5c"></div>
<div class="b" style="left:886.5px;top:902.5px;width:5px;height:1px;background:#6b6b5c"></div>
<div class="b" style="left:888.5px;top:930px;width:1px;height:42px;background:#6b6b5c"></div>
<div class="b" style="left:886.5px;top:971.5px;width:5px;height:1px;background:#6b6b5c"></div>
<!-- group headers -->
<svg width="9" height="8" viewBox="0 0 9 8" style="left:884.500px;top:844.500px"><path d="M0.2 0.2 H8.6 L4.4 7.6 Z" fill="#8a8a8a"/></svg>
<div class="a mono" style="left:901.5px;top:841.3px;font-weight:bold;color:#f0f0f0">Thu Oct 26 2023 17:46:30 GMT+0800 (<span class="cjb">中国标准时间</span>) <span class="cjb" style="margin-left:3px">游客模式</span></div>
<svg width="9" height="8" viewBox="0 0 9 8" style="left:884.5px;top:913.5px"><path d="M0.2 0.2 H8.6 L4.4 7.6 Z" fill="#8a8a8a"/></svg>
<div class="a mono" style="left:901.5px;top:910.3px;font-weight:bold;color:#f0f0f0">Thu Oct 26 2023 17:46:30 GMT+0800 (<span class="cjb">中国标准时间</span>) <span class="cjb" style="margin-left:3px">游客模式</span></div>
<!-- warnings -->
<svg width="14" height="14" viewBox="0 0 14 14" style="left:896.5px;top:865px"><path d="M7 0.8 L13.4 12.8 H0.600 Z" fill="#f5bd00" stroke="#f5bd00" stroke-width="1" stroke-linejoin="round"/><rect x="6.2" y="4.400" width="1.6" height="4.800" fill="#fff"/><rect x="6.2" y="10" width="1.6" height="1.6" fill="#fff"/></svg>
<div class="a mono" style="left:920px;top:865.8px"><span class="cj">请注意游客模式下，调用</span> wx.operateWXData <span class="cj">是受限的</span>, API <span class="cj">的返回是工具的模拟</span></div>
<div class="a mono" style="left:920px;top:883.8px"><span class="cj">返回</span></div>
<svg width="14" height="14" viewBox="0 0 14 14" style="left:896.5px;top:934px"><path d="M7 0.8 L13.4 12.8 H0.6 Z" fill="#f5bd00" stroke="#f5bd00" stroke-width="1" stroke-linejoin="round"/><rect x="6.2" y="4.4" width="1.6" height="4.8" fill="#fff"/><rect x="6.2" y="10" width="1.6" height="1.6" fill="#fff"/></svg>
<div class="a mono" style="left:920px;top:934.8px"><span class="cj">请注意游客模式下，调用</span> wx.operateWXData <span class="cj">是受限的</span>, API <span class="cj">的返回是工具的模拟</span></div>
<div class="a mono" style="left:920px;top:952.8px"><span class="cj">返回</span></div>
<div class="a mono" style="left:901px;top:979.6px">[system] Launch Time: 6598 ms</div>
<svg width="8" height="10" viewBox="0 0 8 10" style="left:882.5px;top:1005.5px"><path d="M1 0.800 L6 5 L1 9.2" fill="none" stroke="#367cf1" stroke-width="1.7"/></svg>

<div class="b" id="status"></div>
</body>
</html>
